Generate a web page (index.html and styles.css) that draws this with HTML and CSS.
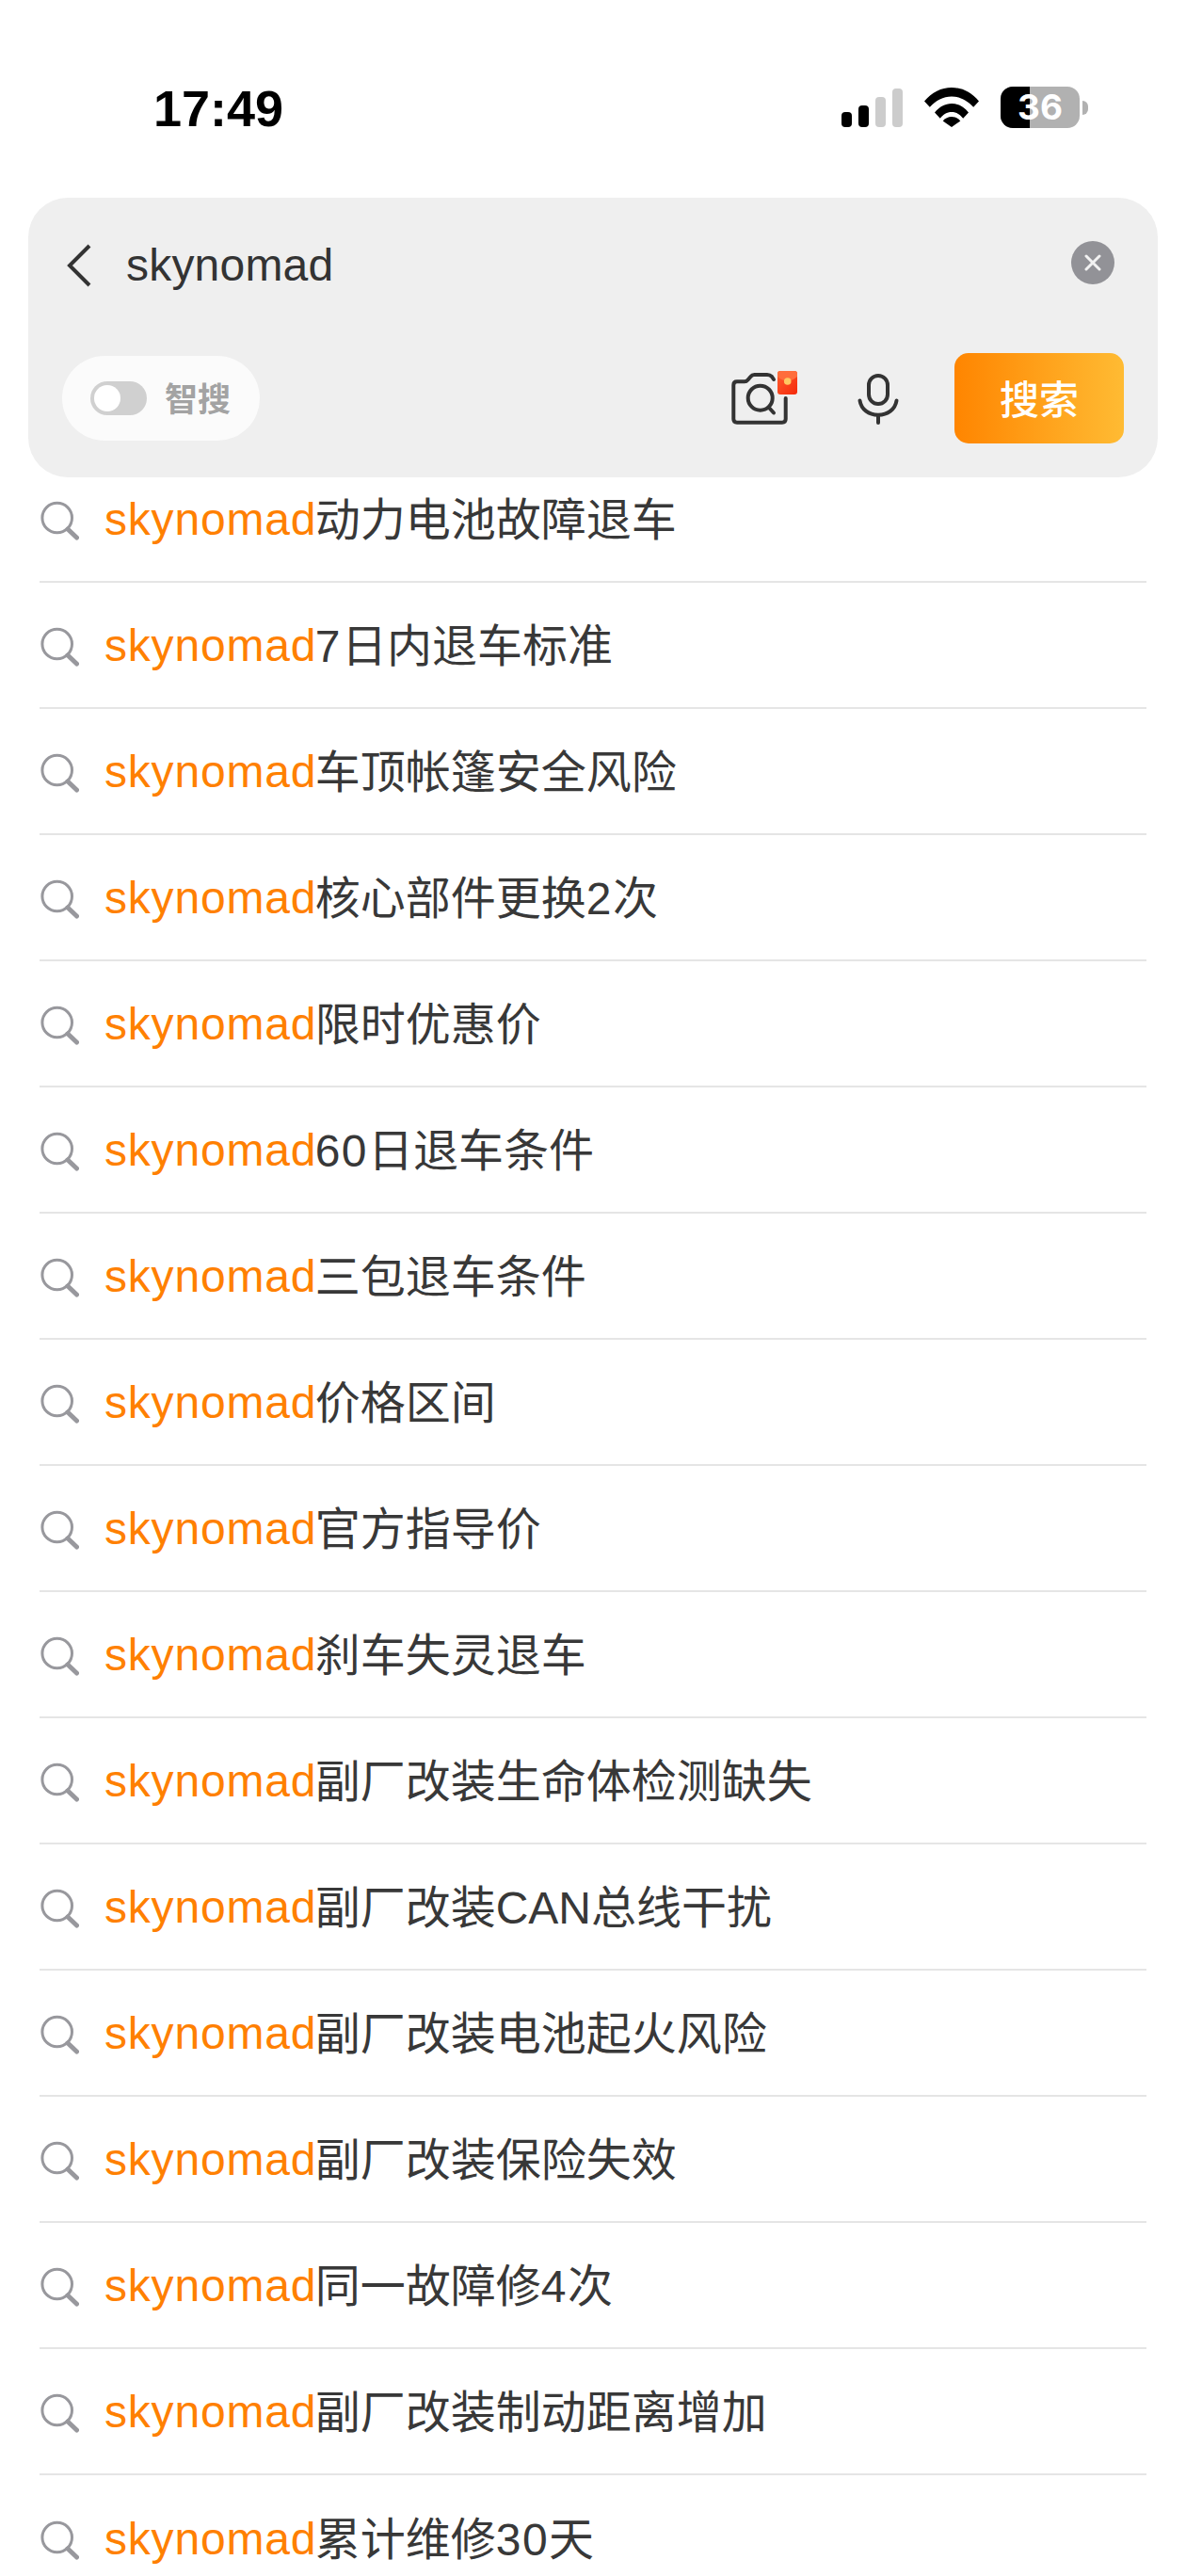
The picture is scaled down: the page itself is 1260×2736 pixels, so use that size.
FILE: index.html
```html
<!DOCTYPE html>
<html lang="zh-CN">
<head>
<meta charset="utf-8">
<title>搜索</title>
<link rel="stylesheet" href="styles.css">
</head>
<body>
<div class="screen">
  <header class="status">
    <span class="time">17:49</span>
    <div class="indicators">
      <div class="signal">
        <i class="bar bar-1"></i><i class="bar bar-2"></i><i class="bar bar-3"></i><i class="bar bar-4"></i>
      </div>
      <svg class="wifi" viewBox="0 0 58 42" width="58" height="42">
        <path d="M0 14.500C8 5 18 0 29 0s21 5 29 14.500l-5.800 6.300C45.500 13.500 38 9.500 29 9.500S12.500 13.500 5.800 20.800z"/>
        <path d="M11 26.500C16 20.500 22 17 29 17s13 3.500 18 9.500l-5.800 6.300C38 28.500 34 26 29 26s-9 2.500-12.200 6.800z"/>
        <path d="M19.700 35.500C22 32.500 25.500 31 29 31s7 1.500 9.300 4.500L29 42z"/>
      </svg>
      <div class="battery">
        <div class="battery-body"><i class="battery-level"></i><span class="battery-text">36</span></div>
        <i class="battery-tip"></i>
      </div>
    </div>
  </header>

  <section class="search-panel">
    <div class="query-row">
      <svg class="back" viewBox="0 0 26 46" width="26" height="46">
        <path d="M24 2 3 23l21 21" fill="none" stroke="#333" stroke-width="4"/>
      </svg>
      <span class="query">skynomad</span>
      <span class="clear">
        <svg viewBox="0 0 18 18" width="18" height="18"><path d="M2 2l14 14M16 2 2 16" stroke="#f2f2f2" stroke-width="3" stroke-linecap="round"/></svg>
      </span>
    </div>
    <div class="action-row">
      <div class="smart">
        <span class="toggle"><i class="knob"></i></span>
        <span class="smart-label">智搜</span>
      </div>
      <div class="camera-wrap">
        <svg class="camera" viewBox="0 0 62 57" width="62" height="57" fill="none" stroke="#333" stroke-width="4" stroke-linecap="round" stroke-linejoin="round">
          <path d="M58.700 28V50Q58.700 53.700 55 53.700H7Q3.300 53.700 3.300 50V14Q3.300 10.300 7 10.300H15Q17 10.300 18.500 8.500L21.500 5Q23 3 25.500 3H39Q42 3 44 5L46 8"/>
          <circle cx="31.700" cy="27.700" r="13"/>
          <path d="M41 38l5 5.500"/>
        </svg>
        <svg class="packet" viewBox="0 0 21 25" width="21" height="25">
          <defs>
            <linearGradient id="packetFill" x1="0" y1="0" x2="1" y2="1">
              <stop offset="0" stop-color="#ff5f30"/>
              <stop offset="1" stop-color="#f5290a"/>
            </linearGradient>
          </defs>
          <rect width="21" height="25" rx="3" fill="url(#packetFill)"/>
          <path d="M0 3Q0 0 3 0H18Q21 0 21 3V6Q10.500 15.500 0 6z" fill="#ff6d3c"/>
          <circle cx="10.700" cy="11" r="3.800" fill="#ffc861"/>
        </svg>
      </div>
      <svg class="mic" viewBox="0 0 44 54" width="44" height="54" fill="none" stroke="#333" stroke-width="4" stroke-linecap="round">
        <rect x="12" y="2" width="20" height="30" rx="10"/>
        <path d="M2.500 28.500C4 38 12 43.700 22 43.700S40 38 41.500 28.500"/>
        <path d="M22 44v8"/>
      </svg>
      <button class="search-btn">搜索</button>
    </div>
  </section>

  <ul class="suggestions">
    <li class="row"><svg class="lens" viewBox="0 0 42 42" width="42" height="42"><use href="#lens-shape"/></svg><span class="hit">skynomad</span><span class="tail">动力电池故障退车</span></li>
    <li class="row"><svg class="lens" viewBox="0 0 42 42" width="42" height="42"><use href="#lens-shape"/></svg><span class="hit">skynomad</span><span class="tail"><span class="num">7</span>日内退车标准</span></li>
    <li class="row"><svg class="lens" viewBox="0 0 42 42" width="42" height="42"><use href="#lens-shape"/></svg><span class="hit">skynomad</span><span class="tail">车顶帐篷安全风险</span></li>
    <li class="row"><svg class="lens" viewBox="0 0 42 42" width="42" height="42"><use href="#lens-shape"/></svg><span class="hit">skynomad</span><span class="tail">核心部件更换<span class="num">2</span>次</span></li>
    <li class="row"><svg class="lens" viewBox="0 0 42 42" width="42" height="42"><use href="#lens-shape"/></svg><span class="hit">skynomad</span><span class="tail">限时优惠价</span></li>
    <li class="row"><svg class="lens" viewBox="0 0 42 42" width="42" height="42"><use href="#lens-shape"/></svg><span class="hit">skynomad</span><span class="tail"><span class="num">60</span>日退车条件</span></li>
    <li class="row"><svg class="lens" viewBox="0 0 42 42" width="42" height="42"><use href="#lens-shape"/></svg><span class="hit">skynomad</span><span class="tail">三包退车条件</span></li>
    <li class="row"><svg class="lens" viewBox="0 0 42 42" width="42" height="42"><use href="#lens-shape"/></svg><span class="hit">skynomad</span><span class="tail">价格区间</span></li>
    <li class="row"><svg class="lens" viewBox="0 0 42 42" width="42" height="42"><use href="#lens-shape"/></svg><span class="hit">skynomad</span><span class="tail">官方指导价</span></li>
    <li class="row"><svg class="lens" viewBox="0 0 42 42" width="42" height="42"><use href="#lens-shape"/></svg><span class="hit">skynomad</span><span class="tail">刹车失灵退车</span></li>
    <li class="row"><svg class="lens" viewBox="0 0 42 42" width="42" height="42"><use href="#lens-shape"/></svg><span class="hit">skynomad</span><span class="tail">副厂改装生命体检测缺失</span></li>
    <li class="row"><svg class="lens" viewBox="0 0 42 42" width="42" height="42"><use href="#lens-shape"/></svg><span class="hit">skynomad</span><span class="tail">副厂改装CAN总线干扰</span></li>
    <li class="row"><svg class="lens" viewBox="0 0 42 42" width="42" height="42"><use href="#lens-shape"/></svg><span class="hit">skynomad</span><span class="tail">副厂改装电池起火风险</span></li>
    <li class="row"><svg class="lens" viewBox="0 0 42 42" width="42" height="42"><use href="#lens-shape"/></svg><span class="hit">skynomad</span><span class="tail">副厂改装保险失效</span></li>
    <li class="row"><svg class="lens" viewBox="0 0 42 42" width="42" height="42"><use href="#lens-shape"/></svg><span class="hit">skynomad</span><span class="tail">同一故障修<span class="num">4</span>次</span></li>
    <li class="row"><svg class="lens" viewBox="0 0 42 42" width="42" height="42"><use href="#lens-shape"/></svg><span class="hit">skynomad</span><span class="tail">副厂改装制动距离增加</span></li>
    <li class="row"><svg class="lens" viewBox="0 0 42 42" width="42" height="42"><use href="#lens-shape"/></svg><span class="hit">skynomad</span><span class="tail">累计维修<span class="num">30</span>天</span></li>
  </ul>

  <!-- shared magnifier used by every suggestion row -->
  <svg class="sprite" width="0" height="0">
    <symbol id="lens-shape" viewBox="0 0 42 42">
      <circle cx="18.700" cy="18" r="15.800" fill="none" stroke="#98989d" stroke-width="3"/>
      <path d="M30 30 39.500 39" stroke="#98989d" stroke-width="5" stroke-linecap="round"/>
    </symbol>
  </svg>
</div>
</body>
</html>
```

FILE: styles.css
```css
* {
  box-sizing: border-box;
}

html,
body {
  margin: 0;
  padding: 0;
  background: #fff;
}

body {
  font-family: "Liberation Sans", "Noto Sans CJK SC", sans-serif;
  color: #333;
}

.screen {
  width: 1260px;
  height: 2736px;
  overflow: hidden;
}

/* Status bar */
.status {
  height: 210px;
  padding: 88px 104px 0 163px;
  display: flex;
  justify-content: space-between;
  align-items: flex-start;
}

.time {
  font-size: 54px;
  font-weight: 700;
  line-height: 54px;
  color: #000;
}

.indicators {
  display: flex;
  align-items: flex-start;
  margin-top: 4px;
}

.signal {
  display: flex;
  align-items: flex-end;
  gap: 7px;
  height: 41px;
  margin-top: 2px;
}

.bar {
  display: block;
  width: 11px;
  border-radius: 4px;
  background: #000;
}

.bar-1 { height: 16px; }
.bar-2 { height: 23px; }
.bar-3 { height: 32px; background: #ccc; }
.bar-4 { height: 41px; background: #ccc; }

.wifi {
  display: block;
  margin-left: 23px;
  margin-top: 1px;
}

.battery {
  display: flex;
  align-items: center;
  margin-left: 23px;
}

.battery-body {
  position: relative;
  width: 84px;
  height: 44px;
  border-radius: 13px;
  overflow: hidden;
  background: #b1b1b1;
}

.battery-level {
  display: block;
  width: 31px;
  height: 100%;
  background: #000;
}

.battery-text {
  position: absolute;
  inset: 0;
  text-align: center;
  font-family: Inter, "Liberation Sans", sans-serif;
  font-size: 37px;
  font-weight: 700;
  line-height: 44px;
  color: #fff;
}

.battery-tip {
  display: block;
  width: 6px;
  height: 15px;
  margin-left: 3px;
  border-radius: 0 6px 6px 0;
  background: #b1b1b1;
}

/* Search panel */
.search-panel {
  position: relative;
  z-index: 1;
  width: 1200px;
  height: 297px;
  margin-left: 30px;
  border-radius: 42px;
  background: #efefef;
}

.query-row {
  height: 165px;
  padding: 49px 46px 0 41px;
  display: flex;
  align-items: flex-start;
}

.back {
  display: block;
  flex: none;
}

.query {
  flex: 1;
  margin-left: 37px;
  font-size: 48px;
  line-height: 46px;
  letter-spacing: 0.2px;
}

.clear {
  flex: none;
  width: 46px;
  height: 46px;
  margin-top: -3px;
  border-radius: 50%;
  background: #929297;
  display: flex;
  align-items: center;
  justify-content: center;
}

.action-row {
  height: 96px;
  padding-left: 36px;
  display: flex;
  align-items: center;
}

.smart {
  width: 210px;
  height: 90px;
  border-radius: 45px;
  background: #fbfbfb;
  display: flex;
  align-items: center;
  padding-left: 30px;
}

.toggle {
  display: block;
  width: 60px;
  height: 36px;
  padding: 4px;
  border-radius: 18px;
  background: #d0d0d0;
}

.knob {
  display: block;
  width: 28px;
  height: 28px;
  border-radius: 50%;
  background: #fff;
}

.smart-label {
  margin: 0 0 3px 19px;
  font-size: 35px;
  font-weight: 700;
  color: #a3a3a3;
}

.camera-wrap {
  position: relative;
  flex: none;
  width: 71px;
  height: 57px;
  margin-left: 500px;
  margin-top: 1px;
}

.camera {
  display: block;
}

.packet {
  position: absolute;
  top: -1px;
  left: 50px;
  display: block;
}

.mic {
  display: block;
  margin-left: 64px;
  margin-top: 2px;
  flex: none;
}

.search-btn {
  flex: none;
  width: 180px;
  height: 96px;
  margin-left: 59px;
  padding: 0 0 3px;
  border: 0;
  border-radius: 15px;
  background: linear-gradient(90deg, #ff8500 0%, #ffbb33 100%);
  color: #fff;
  font-family: inherit;
  font-size: 42px;
  font-weight: 500;
}

/* Suggestion list */
.suggestions {
  list-style: none;
  margin: -22px 0 0;
  padding: 0 42px;
}

.row {
  height: 134px;
  display: flex;
  align-items: center;
  border-bottom: 2px solid #e5e5e5;
  font-size: 48px;
  color: #383838;
  white-space: nowrap;
}

.row:last-child {
  border-bottom: 0;
}

.lens {
  display: block;
  flex: none;
  margin: 4px 27px 0 0;
}

.hit {
  color: #ff8000;
  letter-spacing: 0.8px;
}

/* the remainder of a suggestion sits a little higher than the keyword box */
.tail {
  margin: 0 0 6px -1.5px;
}

.num {
  letter-spacing: 1.5px;
}

.sprite {
  position: absolute;
}
```
